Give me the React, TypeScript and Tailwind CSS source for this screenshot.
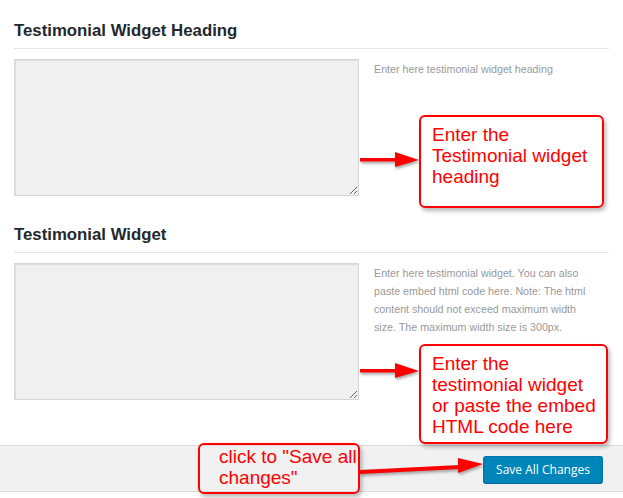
import React from "react";

function Callout({
  className,
  lines,
}: {
  className: string;
  lines: string[];
}) {
  return (
    <div
      className={`absolute border-2 border-[#ff0000] rounded-[6px] shadow-[2px_3px_4px_rgba(0,0,0,0.28)] text-[#ff0000] text-[19px] leading-[21px] whitespace-nowrap ${className}`}
    >
      {lines.map((line, i) => (
        <div key={i}>{line}</div>
      ))}
    </div>
  );
}

function Arrow({ className }: { className: string }) {
  return (
    <svg
      className={`absolute drop-shadow-[1px_2px_1.5px_rgba(0,0,0,0.35)] ${className}`}
      width="60"
      height="20"
      viewBox="0 0 60 20"
    >
      <rect x="0" y="8" width="37" height="3.5" fill="#ff0000" />
      <polygon points="35,2 59,10 35,17" fill="#ff0000" />
    </svg>
  );
}

function Section({ title, help }: { title: string; help: React.ReactNode }) {
  return (
    <section>
      <h2 className="text-[16.8px] leading-[20px] font-bold text-[#23282d]">
        {title}
      </h2>
      <div className="mt-[7px] border-b border-[#e5e5e5]" />
      <div className="mt-[10px] flex gap-[15px]">
        <textarea
          className="w-[345px] h-[137px] bg-[#f0f0f0] border border-[#d6d6d6] shadow-[inset_1px_1px_1px_rgba(0,0,0,0.08)] outline-none"
          defaultValue=""
        />
        <p className="mt-[1px] text-[10.7px] leading-[18px] text-[#999999]">
          {help}
        </p>
      </div>
    </section>
  );
}

export default function App() {
  return (
    <div className="relative w-[623px] h-[498px] bg-white overflow-hidden font-['Liberation_Sans',Arial,sans-serif]">
      <div className="px-[14px] pt-[21px] flex flex-col gap-[29px]">
        <Section
          title="Testimonial Widget Heading"
          help="Enter here testimonial widget heading"
        />
        <Section
          title="Testimonial Widget"
          help={
            <>
              Enter here testimonial widget. You can also
              <br />
              paste embed html code here. Note: The html
              <br />
              content should not exceed maximum width
              <br />
              size. The maximum width size is 300px.
            </>
          }
        />
      </div>

      {/* footer bar */}
      <div className="mt-[45px] h-[47px] bg-[#f1f1f1] border-y border-[#dcdcdc] flex justify-end items-start pr-[20px] pt-[10px]">
        <button className="h-[28px] w-[120px] rounded-[3px] bg-[#0085ba] border border-[#0073aa] border-b-[#006799] text-white text-[12px] font-['Open_Sans',sans-serif]">
          Save All Changes
        </button>
      </div>

      {/* annotations drawn over the page */}
      <Arrow className="left-[360px] top-[150px]" />
      <Callout
        className="left-[419px] top-[115px] w-[185px] h-[93px] pt-[7px] pl-[11px]"
        lines={["Enter the", "Testimonial widget", "heading"]}
      />

      <Arrow className="left-[360px] top-[361px]" />
      <Callout
        className="left-[419px] top-[344px] w-[189px] h-[100px] pt-[7px] pl-[11px]"
        lines={[
          "Enter the",
          "testimonial widget",
          "or paste the embed",
          "HTML code here",
        ]}
      />

      <Callout
        className="left-[198px] top-[443px] w-[162px] h-[51px] pt-[1px] pl-[19px] leading-[20px]"
        lines={['click to "Save all', 'changes"']}
      />
      <svg
        className="absolute left-[358px] top-[455px] drop-shadow-[1px_2px_1.5px_rgba(0,0,0,0.35)]"
        width="128"
        height="22"
        viewBox="0 0 128 22"
      >
        <polygon points="2,15 102,10 102,14 2,19" fill="#ff0000" />
        <polygon points="100,3 125,9 100,18" fill="#ff0000" />
      </svg>
    </div>
  );
}
